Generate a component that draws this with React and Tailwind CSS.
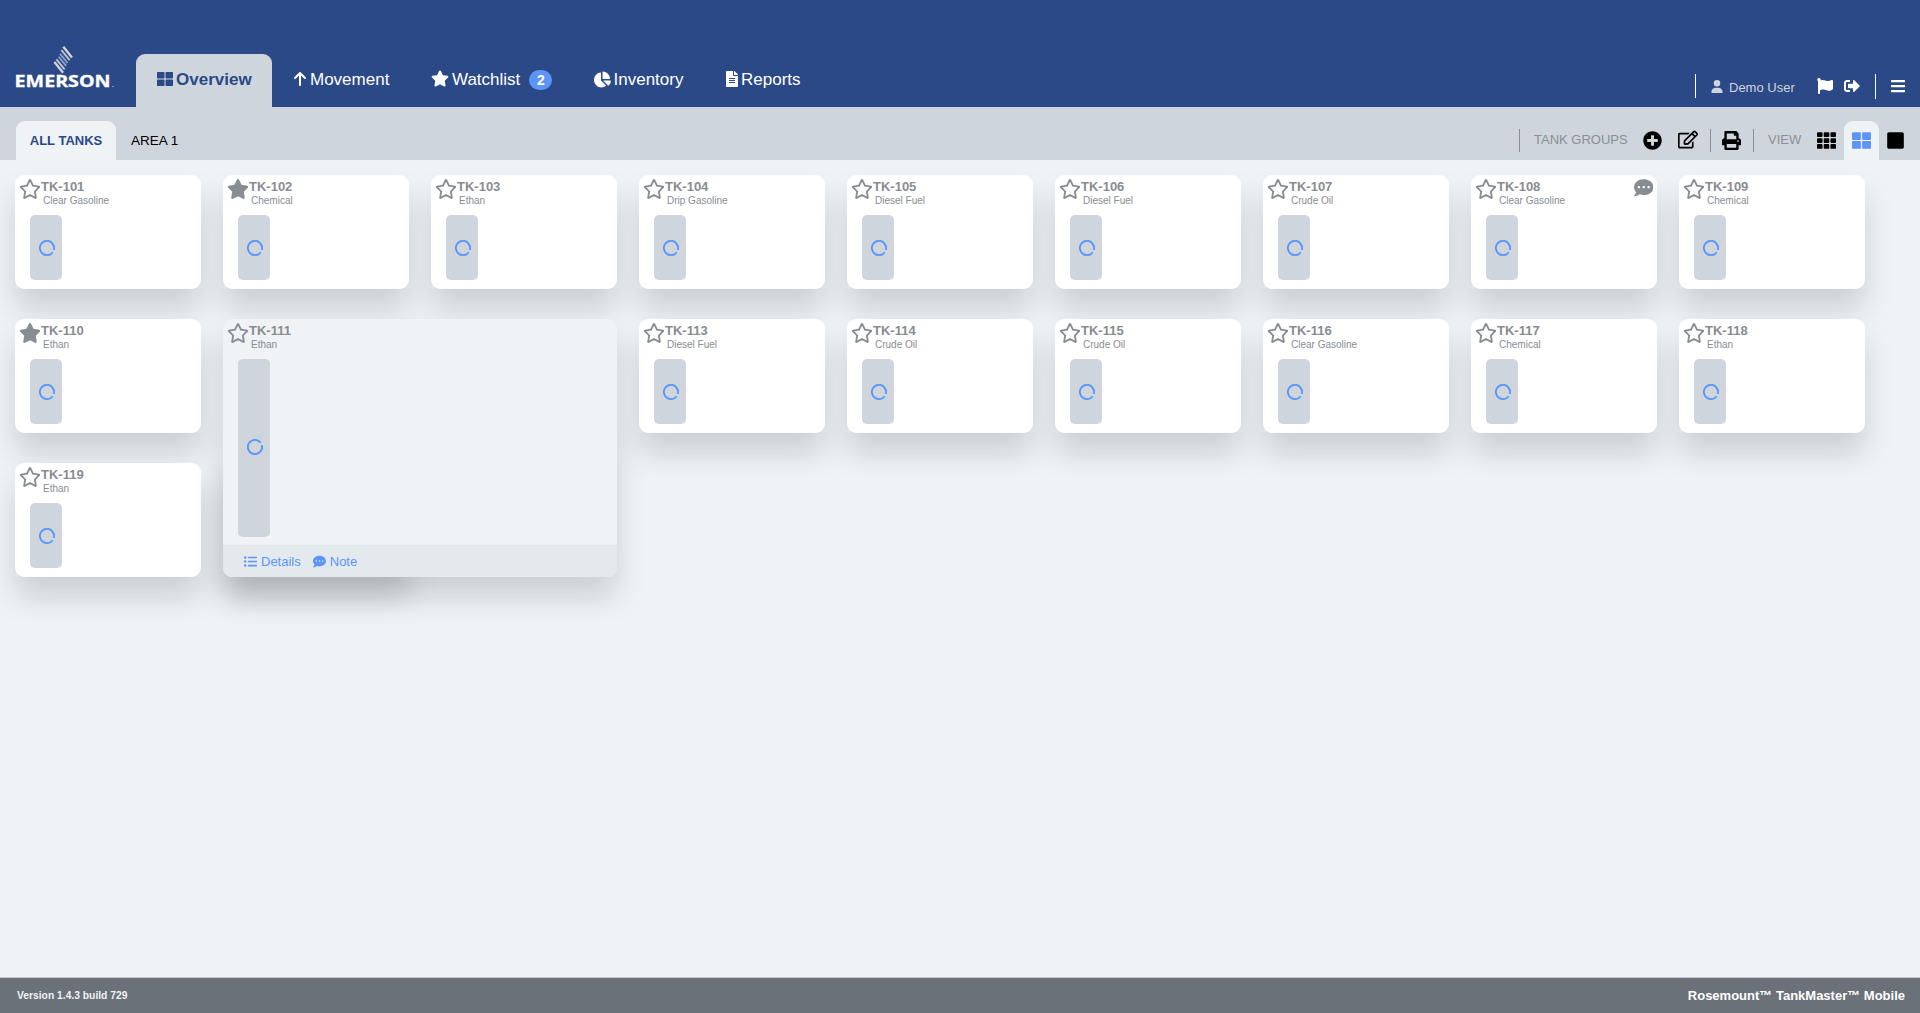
import React from "react";
import {
  FaThLarge, FaTh, FaStar, FaRegStar, FaChartPie, FaPlusCircle, FaRegEdit, FaPrint, FaSquare,
  FaFlag, FaSignOutAlt, FaBars, FaCommentDots, FaListUl, FaFileAlt,
} from "react-icons/fa";
import { FaArrowUp, FaUser } from "react-icons/fa6";

const tanks = [
  ["TK-101", "Clear Gasoline"], ["TK-102", "Chemical", "fav"], ["TK-103", "Ethan"],
  ["TK-104", "Drip Gasoline"], ["TK-105", "Diesel Fuel"], ["TK-106", "Diesel Fuel"],
  ["TK-107", "Crude Oil"], ["TK-108", "Clear Gasoline", "note"], ["TK-109", "Chemical"],
  ["TK-110", "Ethan", "fav"], ["TK-111", "Ethan", "open"], ["TK-113", "Diesel Fuel"],
  ["TK-114", "Crude Oil"], ["TK-115", "Crude Oil"], ["TK-116", "Clear Gasoline"],
  ["TK-117", "Chemical"], ["TK-118", "Ethan"], ["TK-119", "Ethan"],
];

function Logo() {
  return (
    <svg className="ml-[14px] mt-[45px] h-[54px] w-[102px] shrink-0" viewBox="0 0 102 54">
      <g fill="none">
        <path d="M49.3 1.8L58 12.5" stroke="#d4d5d8" strokeWidth="2.3" />
        <path d="M47.4 5.2L55.6 15.2" stroke="#c0c5ce" strokeWidth="1.9" />
        <path d="M46 8.9L53.6 18" stroke="#8aa6cf" strokeWidth="1.7" />
        <path d="M44.6 11.8L52.2 20.9" stroke="#8aa6cf" strokeWidth="1.7" />
        <path d="M42.4 14.4L50.6 24.4" stroke="#c0c5ce" strokeWidth="1.9" />
        <path d="M40.4 17L49.1 27.7" stroke="#d4d5d8" strokeWidth="2.3" />
      </g>
      <text x="0.6" y="42" textLength="96" lengthAdjust="spacingAndGlyphs" fill="#fff" stroke="#fff" strokeWidth="0.3" fontFamily="'Open Sans', sans-serif" fontWeight="700" fontSize="15.3">EMERSON</text>
      <rect x="98" y="41" width="2" height="1" fill="#7f93ba" />
    </svg>
  );
}

function Spinner({ flip }) {
  return (
    <svg className={flip ? "ml-[2px] -mt-[3px] size-4 -scale-y-100" : "ml-[2px] mt-px size-4"} viewBox="0 0 16 16">
      <path d="M14.85 9.8A7.1 7.1 0 1 0 13.7 12.2" fill="none" stroke="#5c95f7" strokeWidth="1.9" />
    </svg>
  );
}

function Card({ name, product, kind }) {
  const open = kind === "open";
  const Star = kind === "fav" ? FaStar : FaRegStar;
  return (
    <div
      className={
        "relative flex flex-col rounded-[9px] text-[#878d92] shadow-[0_20px_30px_rgba(0,0,0,0.145)] " +
        (open ? "h-full bg-[#eff3f6]" : "bg-white")
      }
    >
      <div className="flex h-10 pl-[4px]">
        <Star className="mt-[4px] h-[20px] w-[22px]" preserveAspectRatio="none" />
        <div className="flex flex-col">
          <span className="mt-[4px] text-[13px] leading-[15px] font-bold">{name}</span>
          <span className="ml-[2px] mt-px text-[10px] leading-[12px]">{product}</span>
        </div>
        {kind === "note" && <FaCommentDots className="ml-auto mr-[4px] mt-[3px] size-[19.5px]" />}
      </div>
      <div className={"ml-[15px] flex w-8 items-center justify-center rounded-[5px] bg-[#ced5dc] " + (open ? "h-[178px]" : "h-[65px]")}>
        <Spinner flip={open} />
      </div>
      {open && (
        <div className="mt-auto flex h-8 items-center rounded-b-[9px] bg-[#e4e9ed] pl-[21px] pt-px text-[13px] text-[#5c95f7]">
          <FaListUl className="mr-[4px] size-[13px]" />
          Details
          <FaCommentDots className="ml-[12px] mr-[4px] size-[13px]" />
          Note
        </div>
      )}
    </div>
  );
}

function ExpandedCard(props) {
  return (
    <div className="relative z-10 col-span-2 row-span-2">
      <div className="absolute bottom-0 left-0 h-[114px] w-[186px] rounded-[9px] shadow-[0_20px_30px_rgba(0,0,0,0.145)]" />
      <Card {...props} />
    </div>
  );
}

export default function App() {
  return (
    <div className="flex h-[1013px] w-[1920px] flex-col overflow-hidden bg-[#eff3f6] font-['Liberation_Sans',Arial,sans-serif]">
      <header className="flex h-[107px] shrink-0 bg-[#2b4987] text-white">
        <Logo />
        <nav className="ml-[20px] mt-[54px] flex h-[53px] text-[17px] leading-[52px]">
          <a className="flex w-[136px] rounded-t-[9px] bg-[#ced5dc] pl-[21px] font-bold text-[#2b4987]">
            <FaThLarge className="mr-[3px] mt-[17px] size-4" />Overview
          </a>
          <a className="flex w-[138px] pl-[20px]">
            <FaArrowUp className="mr-[2px] mt-[17px] size-4" />Movement
          </a>
          <a className="flex w-[163px] pl-[21px]">
            <FaStar className="mr-[3px] mt-[16px] h-[17px] w-[18px]" />Watchlist
            <span className="ml-[9px] mt-4 flex h-5 w-[23px] items-center justify-center rounded-full bg-[#5c95f7] text-[14px] font-bold leading-none">2</span>
          </a>
          <a className="flex w-[132px] pl-[21px]">
            <FaChartPie className="mr-[2.5px] mt-[17px] size-[17px]" />Inventory
          </a>
          <a className="flex pl-[21px]">
            <FaFileAlt className="mr-[3px] mt-[17px] h-4 w-3" />Reports
          </a>
        </nav>
        <div className="ml-auto mt-[74px] flex h-[25px]">
          <span className="h-6 w-px bg-white" />
          <FaUser className="ml-[15px] mt-[6px] h-[13px] w-[12px] text-[#ced5dc]" />
          <span className="ml-[6px] mt-[6px] w-[66px] text-[13px] leading-[15px] whitespace-nowrap text-[#ced5dc]">Demo User</span>
          <FaFlag className="ml-[22px] mt-[4px] size-4" />
          <FaSignOutAlt className="ml-[11px] mt-[4px] size-4" />
          <span className="ml-[15px] h-[25px] w-px bg-white" />
          <FaBars className="ml-[14px] mr-[14px] mt-[4px] size-4" />
        </div>
      </header>

      <div className="flex h-[53px] shrink-0 items-end bg-[#ced5dc] pl-4 text-[13px] text-black">
        <div className="flex h-[39px] w-[100px] justify-center rounded-t-[9px] bg-[#eff3f6] font-bold leading-[40px] text-[#2b4987]">ALL TANKS</div>
        <div className="ml-[15px] h-[39px] text-[13.5px] leading-[40px]">AREA 1</div>
        <div className="ml-auto flex h-[39px] text-[#8a9095]">
          <span className="mt-2 h-[23px] w-px bg-[#8a9095]" />
          <span className="ml-[14px] w-[95px] leading-[37px] whitespace-nowrap">TANK GROUPS</span>
          <FaPlusCircle className="ml-[14px] mt-[10px] size-[19px] text-black" />
          <FaRegEdit className="ml-[16px] mt-[9px] h-[19px] w-[20px] text-black" />
          <span className="ml-[12px] mt-2 h-[23px] w-px bg-[#8a9095]" />
          <FaPrint className="ml-[11px] mt-[10px] size-[19px] text-black" />
          <span className="ml-[12px] mt-2 h-[23px] w-px bg-[#8a9095]" />
          <span className="ml-[14px] w-[34px] leading-[37px]">VIEW</span>
          <FaTh className="ml-[15px] mt-[10px] size-[19px] text-black" />
          <span className="ml-[8px] flex h-[39px] w-[35px] justify-center rounded-t-[9px] bg-[#eff3f6]">
            <FaThLarge className="mt-[10px] size-[19px] text-[#5c95f7]" />
          </span>
          <FaSquare className="ml-[8px] mr-[16px] mt-[10px] h-[19px] w-[17px] text-black" />
        </div>
      </div>

      <main className="grid flex-1 content-start grid-cols-[repeat(9,186px)] auto-rows-[114px] gap-x-[22px] gap-y-[30px] pl-[15px] pt-[15px]">
        {tanks.map(([name, product, kind]) =>
          kind === "open" ? (
            <ExpandedCard key={name} name={name} product={product} kind={kind} />
          ) : (
            <Card key={name} name={name} product={product} kind={kind} />
          )
        )}
      </main>

      <footer className="flex h-9 shrink-0 items-center justify-between border-t border-[#c3c8cc] bg-[#6a7178] pl-[17px] pr-[15px] font-bold text-[#f0f2f4]">
        <span className="text-[10.3px]">Version 1.4.3 build 729</span>
        <span className="text-[13px] text-white">Rosemount™ TankMaster™ Mobile</span>
      </footer>
    </div>
  );
}
